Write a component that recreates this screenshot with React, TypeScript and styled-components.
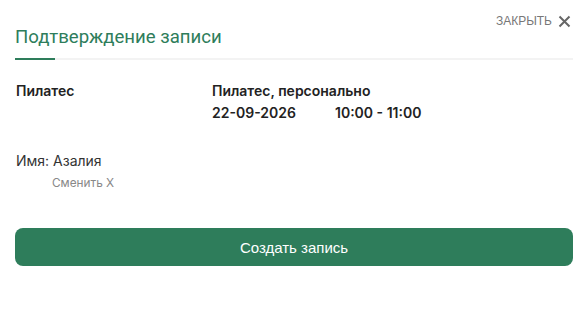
import React from "react";
import styled, { createGlobalStyle } from "styled-components";

const Global = createGlobalStyle`
  html, body { margin: 0; padding: 0; background: #fff; }
  * { box-sizing: border-box; }
`;

const Page = styled.div`
  padding: 0 15px;
  font-family: Inter, "Noto Sans", sans-serif;
  color: #222;
`;

const Header = styled.div`
  position: relative;
  padding-top: 25px;
`;

const Title = styled.h1`
  margin: 0;
  font-family: Roboto, "Liberation Sans", sans-serif;
  font-weight: 400;
  font-size: 18.6px;
  line-height: 24px;
  color: #2e7d5b;
`;

const Close = styled.button`
  position: absolute;
  top: 14px;
  right: 2px;
  display: flex;
  align-items: center;
  gap: 6px;
  border: 0;
  background: none;
  padding: 0;
  font-family: "Liberation Sans", Arial, sans-serif;
  font-size: 12px;
  color: #777;
  cursor: pointer;
`;

const Divider = styled.div`
  margin-top: 9px;
  height: 2px;
  background: #f3f3f3;
  display: flex;
`;

const Accent = styled.div`
  width: 40px;
  height: 2px;
  background: #2e7d5b;
`;

const Info = styled.div`
  display: grid;
  grid-template-columns: 196px 1fr;
  margin-top: 20px;
  padding-left: 1px;
`;

const Bold = styled.div`
  font-weight: 600;
  font-size: 14px;
  line-height: 22px;
  color: #222;
`;

const Row = styled.div`
  display: flex;
`;

const DateCell = styled(Bold)`
  width: 123px;
`;

const Name = styled.div`
  margin-top: 28px;
  padding-left: 1px;
  font-size: 14px;
  line-height: 18px;
  color: #333;
`;

const Change = styled.div`
  margin-top: 6px;
  padding-left: 37px;
  font-size: 11.8px;
  line-height: 14px;
  color: #888;
  cursor: pointer;
`;

const Submit = styled.button`
  display: block;
  width: 100%;
  margin-top: 38px;
  height: 38px;
  border: 0;
  border-radius: 8px;
  background: #2e7d5b;
  color: #fff;
  font-family: "Liberation Sans", Arial, sans-serif;
  font-size: 15px;
  font-weight: 500;
  cursor: pointer;
`;

export default function App() {
  return (
    <Page>
      <Global />
      <Header>
        <Title>Подтверждение записи</Title>
        <Close>
          ЗАКРЫТЬ
          <svg width="13" height="13" viewBox="0 0 13 13">
            <path d="M1.5 1.5 L11.5 11.5 M11.5 1.5 L1.5 11.5" stroke="#666" strokeWidth="2" />
          </svg>
        </Close>
      </Header>
      <Divider>
        <Accent />
      </Divider>
      <Info>
        <Bold>Пилатес</Bold>
        <div>
          <Bold>Пилатес, персонально</Bold>
          <Row>
            <DateCell>22-09-2026</DateCell>
            <Bold>10:00 - 11:00</Bold>
          </Row>
        </div>
      </Info>
      <Name>Имя: Азалия</Name>
      <Change>Сменить Х</Change>
      <Submit>Создать запись</Submit>
    </Page>
  );
}
